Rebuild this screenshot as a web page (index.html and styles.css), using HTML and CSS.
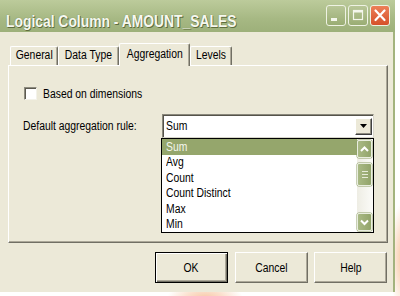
FILE: index.html
```html
<!DOCTYPE html>
<html>
<head>
<meta charset="utf-8">
<link rel="stylesheet" href="styles.css">
</head>
<body>
<div class="window">
  <div class="titlebar">
    <span class="title">Logical Column - AMOUNT_SALES</span>
    <div class="caption-btns">
      <span class="cbtn"><svg width="18" height="19" viewBox="0 0 18 19"><rect x="4" y="12" width="6" height="3" fill="#f4f6ec"/></svg></span>
      <span class="cbtn"><svg width="18" height="19" viewBox="0 0 18 19"><rect x="4.5" y="4.5" width="9" height="9" fill="none" stroke="#f4f6ec" stroke-width="1.2"/><rect x="4" y="4" width="10" height="2.5" fill="#f4f6ec"/></svg></span>
      <span class="cbtn close"><svg width="18" height="19" viewBox="0 0 18 19"><path d="M4.5 4.5 L13.5 14 M13.5 4.5 L4.5 14" stroke="#fff" stroke-width="2.2" stroke-linecap="round"/></svg></span>
    </div>
  </div>
  <div class="content">
    <div class="tabs">
      <div class="tab w-general"><span class="ctxt">General</span></div>
      <div class="tab w-datatype"><span class="ctxt">Data Type</span></div>
      <div class="tab active w-agg"><span class="ctxt">Aggregation</span></div>
      <div class="tab w-levels"><span class="ctxt">Levels</span></div>
    </div>
    <div class="panel">
      <div class="check-row">
        <span class="checkbox"></span>
        <span class="txt">Based on dimensions</span>
      </div>
      <div class="rule-row">
        <div class="rule-label"><span class="txt">Default aggregation rule:</span></div>
        <div class="combo-wrap">
          <div class="combo">
            <span class="combo-value txt">Sum</span>
            <span class="drop-btn"><svg width="9" height="6" viewBox="0 0 9 6"><path d="M1 1 H8 L4.5 5 Z" fill="#000"/></svg></span>
          </div>
          <div class="list">
            <div class="items">
              <div class="item selected"><span class="txt">Sum</span></div>
              <div class="item"><span class="txt">Avg</span></div>
              <div class="item"><span class="txt">Count</span></div>
              <div class="item"><span class="txt">Count Distinct</span></div>
              <div class="item"><span class="txt">Max</span></div>
              <div class="item"><span class="txt">Min</span></div>
            </div>
            <div class="scrollbar">
              <span class="sbtn"><svg width="13" height="16" viewBox="0 0 13 16"><path d="M3 10 L6.5 6.5 L10 10" fill="none" stroke="#fff" stroke-width="2"/></svg></span>
              <div class="track">
                <span class="thumb"><svg width="8" height="9" viewBox="0 0 8 9"><path d="M1 1.5 H7 M1 4.5 H7 M1 7.5 H7" stroke="#e6ebd8" stroke-width="1"/></svg></span>
              </div>
              <span class="sbtn"><svg width="13" height="16" viewBox="0 0 13 16"><path d="M3 6.5 L6.5 10 L10 6.5" fill="none" stroke="#fff" stroke-width="2"/></svg></span>
            </div>
          </div>
        </div>
      </div>
    </div>
    <div class="buttons">
      <div class="btn default"><span class="ctxt">OK</span></div>
      <div class="btn"><span class="ctxt">Cancel</span></div>
      <div class="btn"><span class="ctxt">Help</span></div>
    </div>
  </div>
</div>
</body>
</html>
```
FILE: styles.css
```css
* { box-sizing: border-box; }
body {
  margin: 0;
  width: 400px;
  height: 296px;
  overflow: hidden;
  font-family: "Liberation Sans", Arial, sans-serif;
  font-size: 12.5px;
  color: #000;
  background:
    radial-gradient(ellipse 38px 16px at 205px 298px, #f8c9a8 0%, rgba(248,201,168,0.6) 45%, rgba(255,255,255,0) 100%),
    radial-gradient(ellipse 12px 55px at 402px 258px, #f8c9a8 0%, rgba(248,201,168,0.6) 45%, rgba(255,255,255,0) 100%),
    #ffffff;
}
.txt {
  display: inline-block;
  white-space: nowrap;
  transform: scaleX(0.83);
  transform-origin: left center;
}
.ctxt {
  display: inline-block;
  white-space: nowrap;
  transform: scaleX(0.83);
  transform-origin: center center;
}
.window {
  width: 395px;
  height: 292px;
  background: #ece9d8;
  display: flex;
  flex-direction: column;
}
.titlebar {
  height: 32px;
  flex: none;
  background: linear-gradient(#bccb9b, #a6b883 60%, #9db07a);
  display: flex;
  justify-content: space-between;
  align-items: flex-start;
  padding: 0 5px 0 6px;
}
.title {
  display: inline-block;
  white-space: nowrap;
  margin-top: 12px;
  font-weight: bold;
  font-size: 16.5px;
  line-height: 18px;
  color: #f6f8ef;
  text-shadow: 1px 1px 0 #5f6d3e, 0 0 1px #6b7a47;
  transform: scaleX(0.84);
  transform-origin: left center;
  width: 276px;
}
.caption-btns {
  display: flex;
  gap: 2px;
  margin-top: 5px;
}
.cbtn {
  width: 20px;
  height: 21px;
  border: 1px solid #eef2e3;
  border-radius: 3px;
  background: linear-gradient(#b8c697, #9aad74);
  display: flex;
}
.cbtn.close { background: linear-gradient(#ec8058, #d6502a); }

.content {
  flex: 1;
  border-right: 2px solid #a3b37e;
  padding: 11px 5px 0 8px;
  display: flex;
  flex-direction: column;
}
.tabs {
  display: flex;
  align-items: flex-end;
  height: 22px;
  padding-left: 2px;
}
.tab {
  height: 19px;
  border-top: 1px solid #fff;
  border-left: 1px solid #fff;
  border-right: 1px solid #716f64;
  box-shadow: inset -1px 0 #aca899;
  border-radius: 2px 2px 0 0;
  text-align: center;
  line-height: 16px;
  white-space: nowrap;
}
.tab.active {
  height: 23px;
  padding-top: 2px;
  margin-bottom: -1px;
  position: relative;
  z-index: 1;
  background: #ece9d8;
}
.w-general { width: 48px; }
.w-datatype { width: 61px; }
.w-agg { width: 71px; }
.w-levels { width: 42px; }

.panel {
  height: 178px;
  border: 1px solid;
  border-color: #fff #716f64 #716f64 #fff;
  box-shadow: inset -1px -1px #aca899;
}
.check-row {
  display: flex;
  align-items: center;
  gap: 6px;
  padding: 21px 0 0 15px;
  height: 34px;
}
.checkbox {
  width: 13px;
  height: 13px;
  flex: none;
  background: #fff;
  border: 1px solid;
  border-color: #8e8c80 #f3f2ea #f3f2ea #8e8c80;
  box-shadow: inset 1px 1px #5c5a50;
}
.rule-row {
  display: flex;
  align-items: flex-start;
  margin-top: 14px;
  padding-left: 14px;
}
.rule-label {
  width: 139px;
  flex: none;
  line-height: 24px;
}
.combo-wrap { width: 212px; flex: none; }
.combo {
  height: 24px;
  background: #fff;
  border: 1px solid;
  border-color: #8a887c #d8d6ca #d8d6ca #8a887c;
  box-shadow: inset 1px 1px #55534a;
  display: flex;
  align-items: center;
  justify-content: space-between;
  padding: 2px 1px 2px 3px;
}
.combo-value { line-height: 18px; }
.drop-btn {
  width: 17px;
  height: 17px;
  background: #ece9d8;
  border: 1px solid;
  border-color: #fff #404040 #404040 #fff;
  box-shadow: inset -1px -1px #8e8c80;
  display: flex;
  align-items: center;
  justify-content: center;
}
.list {
  width: 213px;
  margin-left: -1px;
  height: 95px;
  border: 1px solid #000;
  background: #fff;
  display: flex;
}
.items { flex: 1; }
.item {
  height: 15.5px;
  line-height: 15.5px;
  padding-left: 4px;
}
.item.selected {
  background: #95a66c;
  color: #f4f6ec;
  height: 16px;
  line-height: 16px;
}
.scrollbar {
  width: 16px;
  display: flex;
  flex-direction: column;
  padding: 1px 1px 1px 0;
  background: linear-gradient(90deg, #eeede4, #fbfbf8);
}
.sbtn, .thumb {
  width: 15px;
  border: 1px solid #e9eddf;
  border-radius: 2px;
  background: linear-gradient(90deg, #a9b985, #92a46a);
  box-shadow: 0 0 0 0.5px #8fa06a;
  display: flex;
  align-items: center;
  justify-content: center;
}
.sbtn { height: 18px; }
.track { flex: 1; }
.thumb { height: 23px; margin-top: 5px; }

.buttons {
  display: flex;
  justify-content: flex-end;
  gap: 6px;
  margin-top: 9px;
  padding-right: 1px;
}
.btn {
  width: 73px;
  height: 31px;
  background: #ece9d8;
  border: 1px solid;
  border-color: #fff #716f64 #716f64 #fff;
  box-shadow: inset -1px -1px #aca899;
  display: flex;
  align-items: center;
  justify-content: center;
}
.btn.default {
  margin-right: 1px;
  border: 1px solid #000;
  box-shadow: inset 1px 1px #fff, inset -1px -1px #716f64, inset -2px -2px #aca899;
}
```
